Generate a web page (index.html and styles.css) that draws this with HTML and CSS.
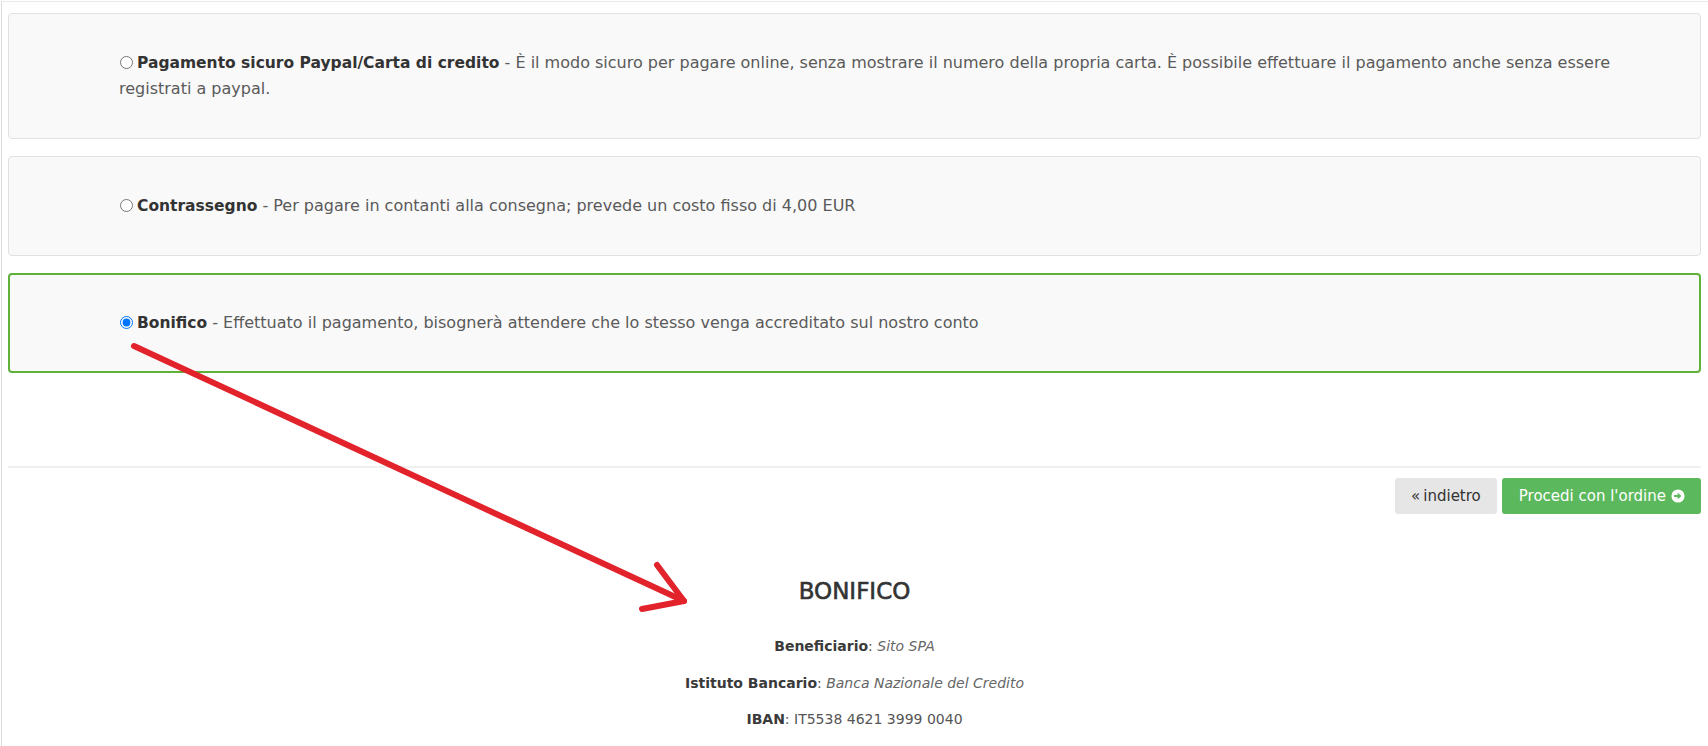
FILE: index.html
```html
<!DOCTYPE html>
<html lang="it">
<head>
<meta charset="utf-8">
<title>Pagamento</title>
<link rel="stylesheet" href="styles.css">
</head>
<body>
<div class="page">
  <div class="panel">
    <label class="opt"><input type="radio" name="pay" class="radio"><b>Pagamento sicuro Paypal/Carta di credito</b> - È il modo sicuro per pagare online, senza mostrare il numero della propria carta. È possibile effettuare il pagamento anche senza essere registrati a paypal.</label>
  </div>
  <div class="panel">
    <label class="opt"><input type="radio" name="pay" class="radio"><b>Contrassegno</b> - Per pagare in contanti alla consegna; prevede un costo fisso di 4,00 EUR</label>
  </div>
  <div class="panel panel-active">
    <label class="opt"><input type="radio" name="pay" class="radio" checked><b>Bonifico</b> - Effettuato il pagamento, bisognerà attendere che lo stesso venga accreditato sul nostro conto</label>
  </div>

  <hr class="sep">

  <div class="actions">
    <button class="btn btn-back">«&#8201;indietro</button>
    <button class="btn btn-go">Procedi con l'ordine
      <svg class="btn-icon" viewBox="0 0 16 16" width="14" height="14" aria-hidden="true">
        <circle cx="8" cy="8" r="7.5" fill="#ffffff"/>
        <path d="M3.6 6.8 H7.6 V4.2 L11.9 8 L7.6 11.8 V9.2 H3.6 Z" fill="#5cb85c"/>
      </svg>
    </button>
  </div>

  <section class="bank">
    <h2 class="bank-title">BONIFICO</h2>
    <p class="bank-line"><b>Beneficiario</b>: <i>Sito SPA</i></p>
    <p class="bank-line"><b>Istituto Bancario</b>: <i>Banca Nazionale del Credito</i></p>
    <p class="bank-line"><b>IBAN</b>: IT5538 4621 3999 0040</p>
  </section>
</div>

<svg class="annot" viewBox="0 0 1708 746" width="1708" height="746" aria-hidden="true">
  <g fill="none" stroke="#e2232b" stroke-width="6" stroke-linecap="round" stroke-linejoin="round">
    <path d="M134 346 Q 400 470 684 601"/>
    <path d="M657 565 L684 601 L642 609"/>
  </g>
</svg>
</body>
</html>
```

FILE: styles.css
```css
html, body {
  margin: 0;
  padding: 0;
  background: #ffffff;
}

body {
  font-family: "DejaVu Sans", "Liberation Sans", sans-serif;
  color: #555555;
  position: relative;
}

.page {
  box-sizing: border-box;
  margin: 1px 0 0 1px;
  min-height: 745px;
  padding: 11px 7px 0 6px;
  border-top: 1px solid #e9e9e9;
  border-left: 1px solid #dcdcdc;
}

.panel {
  background: #f9f9f9;
  border: 1px solid #e1e1e1;
  border-radius: 4px;
  padding: 36px 44px 36px 110px;
  margin-bottom: 17px;
  font-size: 16px;
  line-height: 26px;
}

.panel-active {
  border: 2px solid #5fb13a;
  padding: 35px 43px 35px 109px;
}

.opt {
  display: block;
  color: #5a5a5a;
}

.opt b {
  font-weight: 600;
  font-size: 15.5px;
  color: #333333;
}

.radio {
  width: 13px;
  height: 13px;
  margin: 0 4px 0 1px;
  vertical-align: -1px;
}

.sep {
  border: 0;
  border-top: 2px solid #f0f0f0;
  margin: 93px 0 10px;
}

.actions {
  display: flex;
  justify-content: flex-end;
  gap: 5px;
}

.btn {
  font-family: "DejaVu Sans", "Liberation Sans", sans-serif;
  font-size: 15px;
  height: 36px;
  border: 0;
  border-radius: 3px;
  display: inline-flex;
  align-items: center;
  gap: 5px;
}

.btn-back {
  background: #e6e6e6;
  color: #333333;
  padding: 0 16px;
}

.btn-go {
  background: #5cb85c;
  color: #ffffff;
  padding: 0 16px 0 17px;
}

.btn-icon {
  display: block;
}

.bank {
  text-align: center;
  margin-top: 62px;
}

.bank-title {
  font-size: 23px;
  font-weight: 400;
  line-height: 30px;
  color: #333333;
  margin: 0 0 30px;
  -webkit-text-stroke: 0.6px #333333;
}

.bank-line {
  font-size: 14px;
  line-height: 21px;
  margin: 0 0 15.5px;
  color: #555555;
}

.bank-line b {
  font-weight: 600;
  color: #3a3a3a;
}

.bank-line i {
  color: #666666;
}

.annot {
  position: absolute;
  top: 0;
  left: 0;
  pointer-events: none;
}
```
